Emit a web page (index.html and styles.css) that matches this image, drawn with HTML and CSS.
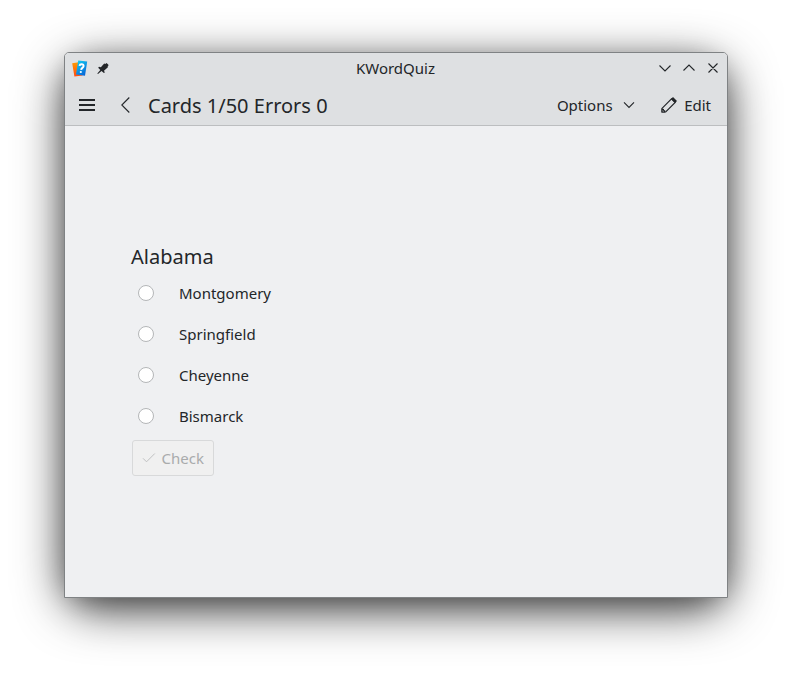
FILE: index.html
```html
<!DOCTYPE html>
<html lang="en">
<head>
<meta charset="utf-8">
<title>KWordQuiz</title>
<link rel="stylesheet" href="styles.css">
</head>
<body>
<main class="window">
  <header class="header">
    <div class="titlebar">
      <div class="title-left">
        <svg class="app-icon" width="16" height="18" viewBox="0 0 16 18">
          <defs>
            <linearGradient id="orange" x1="0" y1="0" x2="0" y2="1"><stop offset="0" stop-color="#ff9b00"/><stop offset="1" stop-color="#ff4a12"/></linearGradient>
            <linearGradient id="blue" x1="0" y1="0" x2=".6" y2="1"><stop offset="0" stop-color="#10d8f5"/><stop offset="1" stop-color="#0868d8"/></linearGradient>
          </defs>
          <path d="M.2 3.2 8.5 2 10.6 15.4 2.4 16.6Z" fill="url(#orange)"/>
          <path d="M6.2.5 15.2 1.6 13 15.8 4 14.5Z" fill="url(#blue)"/>
          <path d="M7.5 5.8C7.8 3.5 12 3.7 11.6 6.2 11.3 8 9.3 7.8 9.1 9.8" fill="none" stroke="#fff" stroke-width="1.9"/>
          <circle cx="8.8" cy="12" r="1.1" fill="#fff"/>
        </svg>
        <svg class="pin" width="14" height="14" viewBox="0 0 14 14" fill="#232629">
          <path d="M8.2 1.5 9.3 1.9 10.5.9 12.4 2.7 12.3 4 11.6 4.6 11.9 5.3 8 8.7 8.8 10.4 7.9 11.1 5.5 9.1 2 12 1.3 11.4 4.3 7.9 2.2 5.7 3 4.8 4.9 5.3Z"/>
        </svg>
      </div>
      <h1 class="title">KWordQuiz</h1>
      <svg class="window-buttons" width="60" height="12" viewBox="0 0 60 12">
        <path d="M.5 3.5 6 9l5.5-5.5M24.5 8.5 30 3l5.5 5.5M49.5 1.5l9 9M58.5 1.5l-9 9"/>
      </svg>
    </div>
    <div class="toolbar">
      <svg class="menu" width="16" height="12" viewBox="0 0 16 12"><path d="M0 1h16M0 6h16M0 11h16"/></svg>
      <svg class="line back" width="10" height="16" viewBox="0 0 10 16"><path d="M9.3 .5 1.8 8 9.3 15.5"/></svg>
      <h2 class="heading">Cards 1/50 Errors 0</h2>
      <span class="options">Options</span>
      <svg class="line chevron" width="12" height="8" viewBox="0 0 12 8"><path d="M1 1.4 6 6.4l5-5"/></svg>
      <svg class="pencil" width="16" height="16" viewBox="0 0 16 16">
        <path d="M1 11.3 10.5 1.8 14.2 5.5 4.7 15H1Z" fill="none" stroke="#232629" stroke-width="1.1"/>
        <path d="M10 2 12 0 16 4 14 6ZM.5 11.5 3 12v1l1.3.5-.3 2H.5Z" fill="#232629"/>
        <path d="M1.6 13.1 3 14.4H1.6Z" fill="#dee0e2"/>
      </svg>
      <span>Edit</span>
    </div>
  </header>
  <section class="quiz">
    <h2 class="question">Alabama</h2>
    <label class="choice"><input type="radio" name="answer">Montgomery</label>
    <label class="choice"><input type="radio" name="answer">Springfield</label>
    <label class="choice"><input type="radio" name="answer">Cheyenne</label>
    <label class="choice"><input type="radio" name="answer">Bismarck</label>
    <button class="check" disabled>
      <svg width="14" height="10" viewBox="0 0 14 10"><path d="M1 5.3 4.5 8.8 12.8.5"/></svg>Check
    </button>
  </section>
</main>
</body>
</html>
```
FILE: styles.css
```css
* { box-sizing: border-box; }
body {
  isolation: isolate;
  margin: 0;
  height: 674px;
  overflow: hidden;
  padding: 52px 64px 76px;
  background: #fff;
  color: #232629;
  font: 15px/20px "Noto Sans", sans-serif;
}
h1, h2 { margin: 0; font-weight: 400; }
svg { display: block; flex: none; }
.window {
  position: relative;
  height: 546px;
  border: 1px solid #7f8284;
  border-radius: 5px 5px 0 0;
  background: #eff0f2;
}
/* Soft drop shadow, rounder than the window itself */
.window::before {
  content: "";
  position: absolute;
  z-index: -1;
  inset: 0;
  border-radius: 28px;
  background: #777;
  clip-path: inset(-80px);
  box-shadow: 0 12px 48px rgba(0, 0, 0, .77), 0 6px 24px rgba(0, 0, 0, .2);
}
.header {
  height: 73px;
  border-bottom: 1px solid #bcbec0;
  border-radius: 4px 4px 0 0;
  background: #dee0e2;
}
.titlebar {
  display: grid;
  grid-template-columns: 1fr auto 1fr;
  align-items: center;
  height: 30px;
  padding: 0 8px 0 7px;
}
.title-left { display: flex; align-items: center; gap: 8px; padding-top: 1px; }
.title { font-size: 15px; }
.window-buttons { justify-self: end; }
.window-buttons path, .line path { fill: none; stroke: #232629; stroke-width: 1.1; }
.toolbar { display: flex; align-items: center; height: 42px; margin-top: 1px; padding: 0 16px 0 14px; }
.menu path { stroke: #232629; stroke-width: 2; }
.back { margin-left: 25px; }
.heading { margin: 0 auto 0 18px; padding-top: 1px; font-size: 20px; line-height: 29px; }
.chevron { margin: 0 26px 0 10.5px; }
.pencil { margin-right: 7px; }
.quiz { padding: 117px 66px 0; }
.question { font-size: 20px; line-height: 28px; margin-bottom: 1px; }
.choice { display: flex; align-items: center; height: 41px; }
.choice input {
  appearance: none;
  width: 16px;
  height: 16px;
  margin: 0 25px 0 7px;
  border: 1px solid #b4b6b8;
  border-radius: 50%;
  background: #fff;
}
.check {
  display: flex;
  align-items: center;
  gap: 5.5px;
  width: 82px;
  height: 36px;
  margin: 4px 0 0 1px;
  padding: 0 9px;
  border: 1px solid #d8d9da;
  border-radius: 3px;
  background: #f0f0f0;
  color: #a9abac;
  font: inherit;
}
.check path { fill: none; stroke: #bfc0c1; }
```
